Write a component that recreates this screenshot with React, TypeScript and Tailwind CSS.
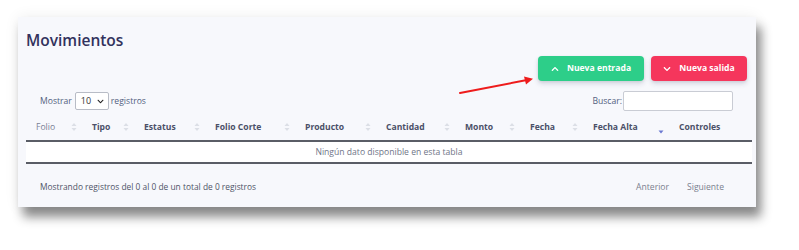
import React from 'react';
import { FaChevronUp, FaChevronDown } from 'react-icons/fa';

const columns = [
  { label: 'Folio', width: 56, bold: false, sort: 'both' },
  { label: 'Tipo', width: 52, bold: true, sort: 'both' },
  { label: 'Estatus', width: 71, bold: true, sort: 'both' },
  { label: 'Folio Corte', width: 90, bold: true, sort: 'both' },
  { label: 'Producto', width: 81, bold: true, sort: 'both' },
  { label: 'Cantidad', width: 79, bold: true, sort: 'both' },
  { label: 'Monto', width: 65, bold: true, sort: 'both' },
  { label: 'Fecha', width: 63, bold: true, sort: 'both' },
  { label: 'Fecha Alta', width: 86, bold: true, sort: 'desc' },
  { label: 'Controles', width: 83, bold: true, sort: 'none' },
];

const SortIcon = ({ type }: { type: string }) => {
  if (type === 'none') return null;
  if (type === 'desc') {
    return (
      <svg width="6" height="10" viewBox="0 0 6 10" className="mt-[4px]">
        <path d="M0.5 5.5 L5.5 5.5 L3 8.5 Z" fill="#6a78d1" />
      </svg>
    );
  }
  return (
    <svg width="6" height="10" viewBox="0 0 6 10">
      <path d="M0.5 4 L5.5 4 L3 1 Z" fill="#dcdfe6" />
      <path d="M0.5 6 L5.5 6 L3 9 Z" fill="#dcdfe6" />
    </svg>
  );
};

const App: React.FC = () => {
  return (
    <div
      className="relative w-[799px] h-[250px] bg-white pt-[17px] pl-[18px]"
      style={{ fontFamily: '"Open Sans", "Liberation Sans", sans-serif' }}
    >
      <div className="w-[738px] h-[190px] bg-[#f7f8fc] shadow-[5px_10px_10px_rgba(0,0,0,0.45),0_0_14px_rgba(0,0,0,0.07)] flex flex-col pl-[8px] pr-[4px]">
        <h1 className="pt-[11px] h-[35px] text-[15.5px] leading-[24px] font-semibold text-[#32325d]">
          Movimientos
        </h1>

        <div className="mt-[4px] h-[25px] flex justify-end gap-[7px] pr-[5px]">
          <button className="w-[106px] h-[25px] rounded-[4px] bg-[#2dce89] text-white text-[8.6px] font-bold flex items-center justify-center gap-[8px] shadow-[0_3px_5px_rgba(50,50,93,0.15),0_1px_3px_rgba(0,0,0,0.08)]">
            <FaChevronUp className="w-[8px] h-[8px]" />
            Nueva entrada
          </button>
          <button className="w-[96px] h-[25px] rounded-[4px] bg-[#f5365c] text-white text-[8.6px] font-bold flex items-center justify-center gap-[8px] shadow-[0_3px_5px_rgba(50,50,93,0.15),0_1px_3px_rgba(0,0,0,0.08)]">
            <FaChevronDown className="w-[8px] h-[8px]" />
            Nueva salida
          </button>
        </div>

        <div className="mt-[10px] h-[20px] flex items-center justify-between pl-[14px] pr-[19px] text-[8.6px] text-[#525f7f]">
          <div className="flex items-center gap-[2px]">
            <span>Mostrar</span>
            <div className="ml-[1px] w-[34px] h-[18px] bg-white border border-[#b8bcc6] rounded-[2px] flex items-center justify-between pl-[5px] pr-[4px] text-[9px] text-[#333]">
              <span>10</span>
              <FaChevronDown className="w-[7px] h-[7px] text-[#222]" />
            </div>
            <span>registros</span>
          </div>
          <div className="flex items-center gap-[1px]">
            <span>Buscar:</span>
            <div className="w-[110px] h-[20px] bg-white border border-[#c9ccd4] rounded-[2px]" />
          </div>
        </div>

        <div className="w-[726px]">
          <div className="flex h-[31px] pt-[4px] border-b-2 border-[#5a5d66] items-center">
            {columns.map((c) => (
              <div
                key={c.label}
                style={{ width: c.width }}
                className="flex items-center justify-between pl-[10px] pr-[5px] shrink-0"
              >
                <span className={c.bold ? 'text-[8.6px] font-bold text-[#4b5068]' : 'text-[8.6px] text-[#7a7f94]'}>
                  {c.label}
                </span>
                <SortIcon type={c.sort} />
              </div>
            ))}
          </div>
          <div className="h-[22px] bg-white border-b-2 border-[#5a5d66] flex items-center justify-center text-[8.6px] text-[#6f7587]">
            Ningún dato disponible en esta tabla
          </div>
        </div>

        <div className="flex-1 flex items-center justify-between pl-[14px] pr-[28px] pt-[4px] text-[8.4px]">
          <span className="text-[#4f5468]">Mostrando registros del 0 al 0 de un total de 0 registros</span>
          <div className="flex gap-[18px] text-[8.6px] text-[#7a7f8e]">
            <span>Anterior</span>
            <span>Siguiente</span>
          </div>
        </div>
      </div>

      <svg
        className="absolute left-[455px] top-[72px]"
        width="85"
        height="26"
        viewBox="0 0 85 26"
      >
        <line x1="5" y1="21" x2="72" y2="8" stroke="#ee1c1c" strokeWidth="2" strokeLinecap="round" />
        <path d="M78 6.8 L69 4.5 L71 12.5 Z" fill="#ee1c1c" />
      </svg>
    </div>
  );
};

export default App;
